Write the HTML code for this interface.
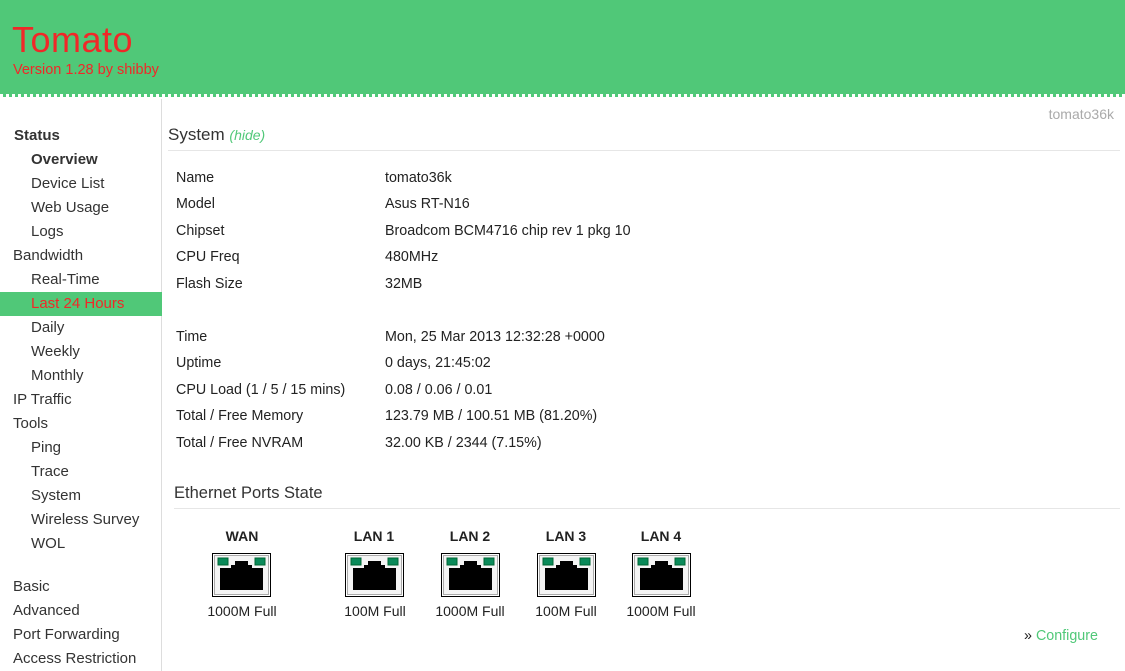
<!DOCTYPE html>
<html><head><style>
*{margin:0;padding:0;box-sizing:border-box}
body{width:1125px;height:671px;overflow:hidden;background:#fff;font-family:"Liberation Sans",sans-serif;font-size:14.3px;color:#222;position:relative}
#hdr{position:absolute;left:0;top:0;width:1125px;height:97px;background:#50c878;border-bottom:3px dotted #fff}
#hdr .t{position:absolute;left:12px;top:19px;font-size:36px;color:#f02828;letter-spacing:0.5px}
#hdr .v{position:absolute;left:13px;top:62px;font-size:14.5px;color:#f02828}
#side{position:absolute;left:0;top:99px;width:162px;height:572px;border-right:1px solid #ddd}
.n{position:absolute;font-size:15px;color:#333;height:24px;line-height:24px}
.n.b{font-weight:bold}
.sel{position:absolute;left:0;top:292px;width:162px;height:24px;background:#50c878}
.x{position:absolute;white-space:nowrap}
.hr{position:absolute;height:1px;background:#e6e6e6}
.pl{position:absolute;font-weight:bold;font-size:14px;text-align:center;width:80px}
.ps{position:absolute;font-size:14px;text-align:center;width:90px}
</style></head><body>
<div id="hdr"><div class="t">Tomato</div><div class="v">Version 1.28 by shibby</div></div>
<div id="side"></div>
<div class="sel"></div>
<div class="n b" style="left:14px;top:124px">Status</div>
<div class="n b" style="left:31px;top:148px">Overview</div>
<div class="n" style="left:31px;top:172px">Device List</div>
<div class="n" style="left:31px;top:196px">Web Usage</div>
<div class="n" style="left:31px;top:220px">Logs</div>
<div class="n" style="left:13px;top:244px">Bandwidth</div>
<div class="n" style="left:31px;top:268px">Real-Time</div>
<div class="n" style="left:31px;top:292px;color:#f02828">Last 24 Hours</div>
<div class="n" style="left:31px;top:316px">Daily</div>
<div class="n" style="left:31px;top:340px">Weekly</div>
<div class="n" style="left:31px;top:364px">Monthly</div>
<div class="n" style="left:13px;top:388px">IP Traffic</div>
<div class="n" style="left:13px;top:412px">Tools</div>
<div class="n" style="left:31px;top:436px">Ping</div>
<div class="n" style="left:31px;top:460px">Trace</div>
<div class="n" style="left:31px;top:484px">System</div>
<div class="n" style="left:31px;top:508px">Wireless Survey</div>
<div class="n" style="left:31px;top:532px">WOL</div>
<div class="n" style="left:13px;top:575px">Basic</div>
<div class="n" style="left:13px;top:599px">Advanced</div>
<div class="n" style="left:13px;top:623px">Port Forwarding</div>
<div class="n" style="left:13px;top:647px">Access Restriction</div>

<div class="x" style="right:11px;top:106px;color:#aaa;font-size:14px">tomato36k</div>
<div class="x" style="left:168px;top:125px;font-size:17px;color:#333">System <i style="font-size:14px;color:#50c878">(hide)</i></div>
<div class="hr" style="left:168px;top:150px;width:952px"></div>
<div class="x" style="left:176px;top:170px">Name</div><div class="x" style="left:385px;top:170px">tomato36k</div>
<div class="x" style="left:176px;top:196px">Model</div><div class="x" style="left:385px;top:196px">Asus RT-N16</div>
<div class="x" style="left:176px;top:223px">Chipset</div><div class="x" style="left:385px;top:223px">Broadcom BCM4716 chip rev 1 pkg 10</div>
<div class="x" style="left:176px;top:249px">CPU Freq</div><div class="x" style="left:385px;top:249px">480MHz</div>
<div class="x" style="left:176px;top:276px">Flash Size</div><div class="x" style="left:385px;top:276px">32MB</div>
<div class="x" style="left:176px;top:329px">Time</div><div class="x" style="left:385px;top:329px">Mon, 25 Mar 2013 12:32:28 +0000</div>
<div class="x" style="left:176px;top:355px">Uptime</div><div class="x" style="left:385px;top:355px">0 days, 21:45:02</div>
<div class="x" style="left:176px;top:382px">CPU Load (1 / 5 / 15 mins)</div><div class="x" style="left:385px;top:382px">0.08 / 0.06 / 0.01</div>
<div class="x" style="left:176px;top:408px">Total / Free Memory</div><div class="x" style="left:385px;top:408px">123.79 MB / 100.51 MB (81.20%)</div>
<div class="x" style="left:176px;top:435px">Total / Free NVRAM</div><div class="x" style="left:385px;top:435px">32.00 KB / 2344 (7.15%)</div>
<div class="x" style="left:174px;top:484px;font-size:16.5px;color:#333">Ethernet Ports State</div>
<div class="hr" style="left:174px;top:508px;width:946px"></div>

<svg width="0" height="0" style="position:absolute"><defs><g id="p">
<rect x="0.5" y="0.5" width="58" height="43" fill="#fff" stroke="#000"/>
<rect x="2.5" y="2.5" width="54" height="39" fill="#f4f4f4" stroke="#aaa"/>
<rect x="6" y="5" width="10" height="7" fill="#0a8a5a" stroke="#063"/>
<rect x="43" y="5" width="10" height="7" fill="#0a8a5a" stroke="#063"/>
<path d="M8 15H19V12H23V8H36V12H40V15H51V37H8Z" fill="#000"/>
</g></defs></svg>
<div class="pl" style="left:202px;top:528px">WAN</div>
<div class="pl" style="left:334px;top:528px">LAN 1</div>
<div class="pl" style="left:430px;top:528px">LAN 2</div>
<div class="pl" style="left:526px;top:528px">LAN 3</div>
<div class="pl" style="left:621px;top:528px">LAN 4</div>
<svg style="position:absolute;left:212px;top:553px" width="59" height="44"><use href="#p"/></svg>
<svg style="position:absolute;left:345px;top:553px" width="59" height="44"><use href="#p"/></svg>
<svg style="position:absolute;left:441px;top:553px" width="59" height="44"><use href="#p"/></svg>
<svg style="position:absolute;left:537px;top:553px" width="59" height="44"><use href="#p"/></svg>
<svg style="position:absolute;left:632px;top:553px" width="59" height="44"><use href="#p"/></svg>
<div class="ps" style="left:197px;top:603px">1000M Full</div>
<div class="ps" style="left:330px;top:603px">100M Full</div>
<div class="ps" style="left:425px;top:603px">1000M Full</div>
<div class="ps" style="left:521px;top:603px">100M Full</div>
<div class="ps" style="left:616px;top:603px">1000M Full</div>
<div class="x" style="left:1024px;top:628px">» <span style="color:#50c878">Configure</span></div>
</body></html>
